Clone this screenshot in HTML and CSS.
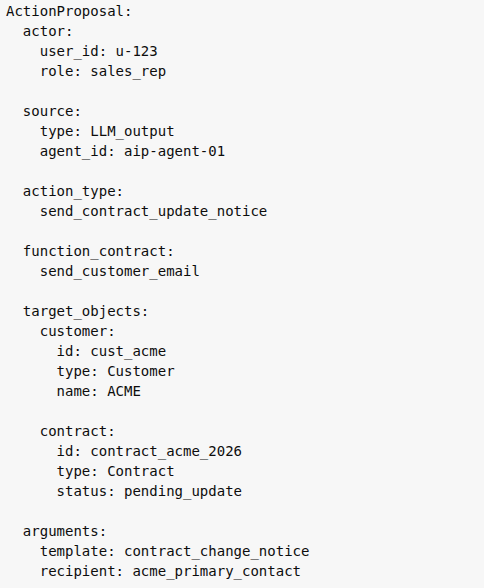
FILE: index.html
```html
<!DOCTYPE html>
<html>
<head>
<meta charset="utf-8">
<link rel="stylesheet" href="styles.css">
</head>
<body>
<pre class="code">ActionProposal:
  actor:
    user_id: u-123
    role: sales_rep

  source:
    type: LLM_output
    agent_id: aip-agent-01

  action_type:
    send_contract_update_notice

  function_contract:
    send_customer_email

  target_objects:
    customer:
      id: cust_acme
      type: Customer
      name: ACME

    contract:
      id: contract_acme_2026
      type: Contract
      status: pending_update

  arguments:
    template: contract_change_notice
    recipient: acme_primary_contact</pre>
</body>
</html>
```

FILE: styles.css
```css
html, body {
  margin: 0;
  padding: 0;
  background: #f7f7f7;
}
.code {
  margin: 0;
  padding: 1px 0 0 6px;
  font-family: "DejaVu Sans Mono", monospace;
  font-size: 14px;
  line-height: 20px;
  color: #0d0d0d;
}
```
